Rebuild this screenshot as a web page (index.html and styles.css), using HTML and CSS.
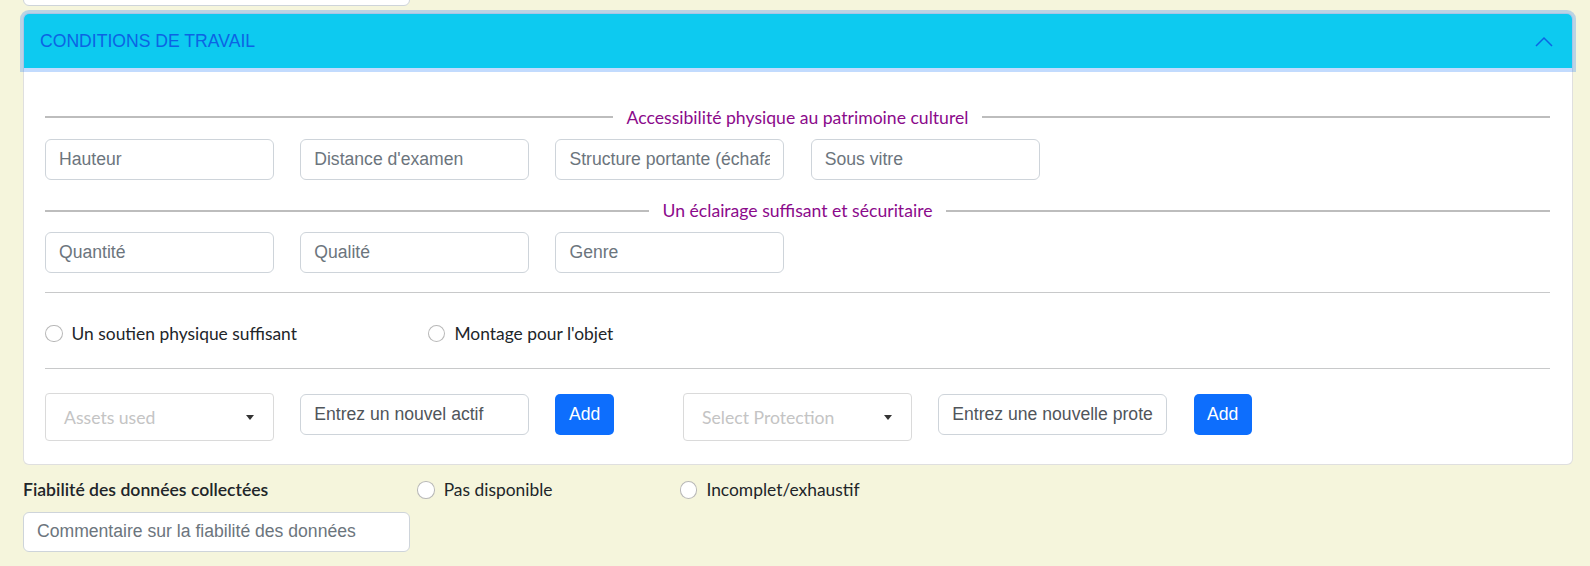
FILE: index.html
```html
<!DOCTYPE html>
<html lang="fr">
<head>
<meta charset="utf-8">
<title>Conditions de travail</title>
<link rel="stylesheet" href="styles.css">
</head>
<body>
<div class="page">
  <input class="form-control top-input" type="text">

  <div class="card">
    <div class="acc-header">
      <span class="acc-title">CONDITIONS DE TRAVAIL</span>
      <svg class="chevron" width="18" height="11" viewBox="0 0 18 11"><polyline points="1,10 9,2 17,10" fill="none" stroke="#0c63e4" stroke-width="1.5"/></svg>
    </div>
    <div class="acc-body">
      <div class="legend legend-first"><span>Accessibilité physique au patrimoine culturel</span></div>
      <div class="grid12 row-inputs">
        <input class="form-control span2" type="text" placeholder="Hauteur">
        <input class="form-control span2" type="text" placeholder="Distance d'examen">
        <input class="form-control span2" type="text" placeholder="Structure portante (échafaudage)">
        <input class="form-control span2" type="text" placeholder="Sous vitre">
      </div>

      <div class="legend legend-second"><span>Un éclairage suffisant et sécuritaire</span></div>
      <div class="grid12 row-inputs">
        <input class="form-control span2" type="text" placeholder="Quantité">
        <input class="form-control span2" type="text" placeholder="Qualité">
        <input class="form-control span2" type="text" placeholder="Genre">
      </div>

      <hr class="sep sep-first">

      <div class="grid12 radio-row">
        <label class="check span3"><span class="radio"></span><span>Un soutien physique suffisant</span></label>
        <label class="check span3"><span class="radio"></span><span>Montage pour l'objet</span></label>
      </div>

      <hr class="sep sep-second">

      <div class="grid12 assets-row">
        <div class="select span2"><span class="sel-ph">Assets used</span><span class="caret"></span></div>
        <input class="form-control span2 dark-ph" type="text" placeholder="Entrez un nouvel actif">
        <button class="btn">Add</button>
        <div class="select span2"><span class="sel-ph">Select Protection</span><span class="caret"></span></div>
        <input class="form-control span2 dark-ph" type="text" placeholder="Entrez une nouvelle protection">
        <button class="btn">Add</button>
      </div>
    </div>
  </div>

  <div class="outer-row">
    <div class="outer-label">Fiabilité des données collectées</div>
    <label class="check outer-check"><span class="radio"></span><span>Pas disponible</span></label>
    <label class="check outer-check"><span class="radio"></span><span>Incomplet/exhaustif</span></label>
  </div>
  <input class="form-control comment-input" type="text" placeholder="Commentaire sur la fiabilité des données">
</div>
</body>
</html>
```

FILE: styles.css
```css
* { box-sizing: border-box; }

body {
  margin: 0;
  background: #f5f5dc;
  font-family: "Lato", "Noto Sans", sans-serif;
  font-size: 17.6px;
  color: #212529;
}

.page {
  width: 1550px;
  margin-left: 23px;
  margin-top: -35px;
}

.form-control {
  display: block;
  height: 41px;
  padding: 0 13px;
  font-family: "Liberation Sans", Arial, sans-serif;
  font-size: 17.6px;
  color: #212529;
  background: #fff;
  border: 1px solid #ced4da;
  border-radius: 6px;
  outline: none;
  min-width: 0;
}
.form-control::placeholder { color: #6c757d; opacity: 1; }
.form-control.dark-ph::placeholder { color: #50555b; }

.top-input { width: 387px; }

.card {
  margin-top: 7px;
  background: #fff;
  border: 1px solid rgba(0, 0, 0, 0.125);
  border-radius: 6px;
}

.acc-header {
  position: relative;
  z-index: 1;
  height: 54px;
  display: flex;
  align-items: center;
  justify-content: space-between;
  padding: 0 19px 0 16px;
  background: #0dcaf0;
  border-radius: 5px 5px 0 0;
  box-shadow: 0 0 0 4px rgba(13, 110, 253, 0.25);
}
.acc-title {
  font-family: "Liberation Sans", Arial, sans-serif;
  font-size: 17.6px;
  color: #0c63e4;
}
.chevron { display: block; }

.acc-body {
  padding: 36px 22px 23px 21px;
}

.legend {
  display: flex;
  align-items: center;
  gap: 13.5px;
  height: 26px;
  color: #8b0a8b;
  font-size: 17.6px;
  white-space: nowrap;
}
.legend::before,
.legend::after {
  content: "";
  flex: 1;
  height: 2px;
  background: #bdbdbd;
}
.legend-second { margin-top: 18px; }

.grid12 {
  display: grid;
  grid-template-columns: repeat(12, 1fr);
  column-gap: 26.4px;
}
.span2 { grid-column: span 2; }
.span3 { grid-column: span 3; }

.row-inputs { margin-top: 8.5px; }

.sep {
  margin: 0;
  border: 0;
  height: 1px;
  background: #c8c9ca;
}
.sep-first { margin-top: 18.5px; }
.sep-second { margin-top: 21.5px; }

.radio-row { margin-top: 28px; }

.check {
  display: flex;
  align-items: center;
  height: 26.4px;
  gap: 9px;
  font-size: 17.4px;
  color: #212529;
  white-space: nowrap;
}
.radio {
  flex: none;
  width: 17.6px;
  height: 17.6px;
  border: 1px solid rgba(0, 0, 0, 0.28);
  border-radius: 50%;
  background: #fff;
}

.assets-row {
  margin-top: 24px;
  align-items: start;
}

.select {
  height: 47.4px;
  display: flex;
  align-items: center;
  justify-content: space-between;
  padding: 0 19px 0 18px;
  background: #fff;
  border: 1px solid #dadada;
  border-radius: 4px;
}
.sel-ph {
  color: #c4c4c4;
  font-size: 17.6px;
}
.caret {
  width: 0;
  height: 0;
  border-left: 4.5px solid transparent;
  border-right: 4.5px solid transparent;
  border-top: 5.5px solid #333;
}

.assets-row .form-control { margin-top: 0.7px; }

.btn {
  justify-self: start;
  margin-top: 0.7px;
  height: 40.7px;
  padding: 0 13.5px;
  background: #0d6efd;
  color: #fff;
  border: 0;
  border-radius: 5px;
  font-family: "Liberation Sans", Arial, sans-serif;
  font-size: 17.6px;
}

.outer-row {
  margin-top: 12px;
  display: grid;
  grid-template-columns: repeat(12, 1fr);
  column-gap: 26.4px;
  align-items: center;
}
.outer-label {
  grid-column: span 3;
  font-weight: 600;
  font-size: 17.6px;
  color: #212529;
  white-space: nowrap;
}
.outer-check { grid-column: span 2; }

.comment-input {
  margin-top: 8.5px;
  width: 387px;
  height: 40px;
}
```
